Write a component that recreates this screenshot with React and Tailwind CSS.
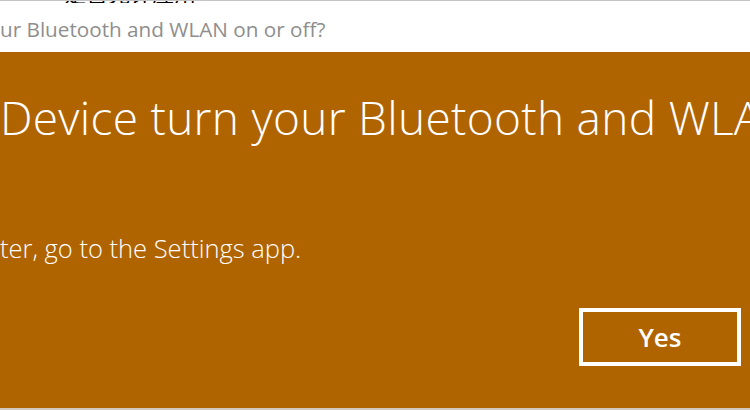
import React from 'react';

const App = () => {
  return (
    <div className="w-[750px] h-[410px] overflow-hidden bg-white font-['Open_Sans','Noto_Sans',sans-serif]">
      {/* window title, cut at the top edge */}
      <div className="h-[3px] overflow-hidden border-t border-[#c4c4c4] pl-[64px] flex items-end">
        <div className="shrink-0 text-[22px] leading-[22px] text-black font-['Noto_Sans_CJK_SC',sans-serif] whitespace-nowrap">
          是否允许应用
        </div>
      </div>

      {/* question line */}
      <div className="h-[49px] pt-[11px] text-[20.7px] leading-[30px] text-[#8e8e8e] whitespace-nowrap">
        ur Bluetooth and WLAN on or off?
      </div>

      {/* dialog body */}
      <div className="h-[356px] bg-[#b06400] flex flex-col text-white overflow-hidden">
        <div className="mt-[35px] text-[46px] leading-[60px] font-light tracking-[0.3px] whitespace-nowrap">
          Device turn your Bluetooth and WLAN on or off?
        </div>
        <div className="mt-[83px] text-[25.5px] leading-[36px] font-light whitespace-nowrap">
          ter, go to the Settings app.
        </div>
        <div className="flex justify-end pr-[9px] mt-[42px]">
          <button className="w-[162px] h-[58px] border-[4px] border-white text-[26px] font-semibold text-white flex items-center justify-center">
            Yes
          </button>
        </div>
      </div>
      <div className="h-[2px] bg-[#d2c8bd]" />
    </div>
  );
};

export default App;
